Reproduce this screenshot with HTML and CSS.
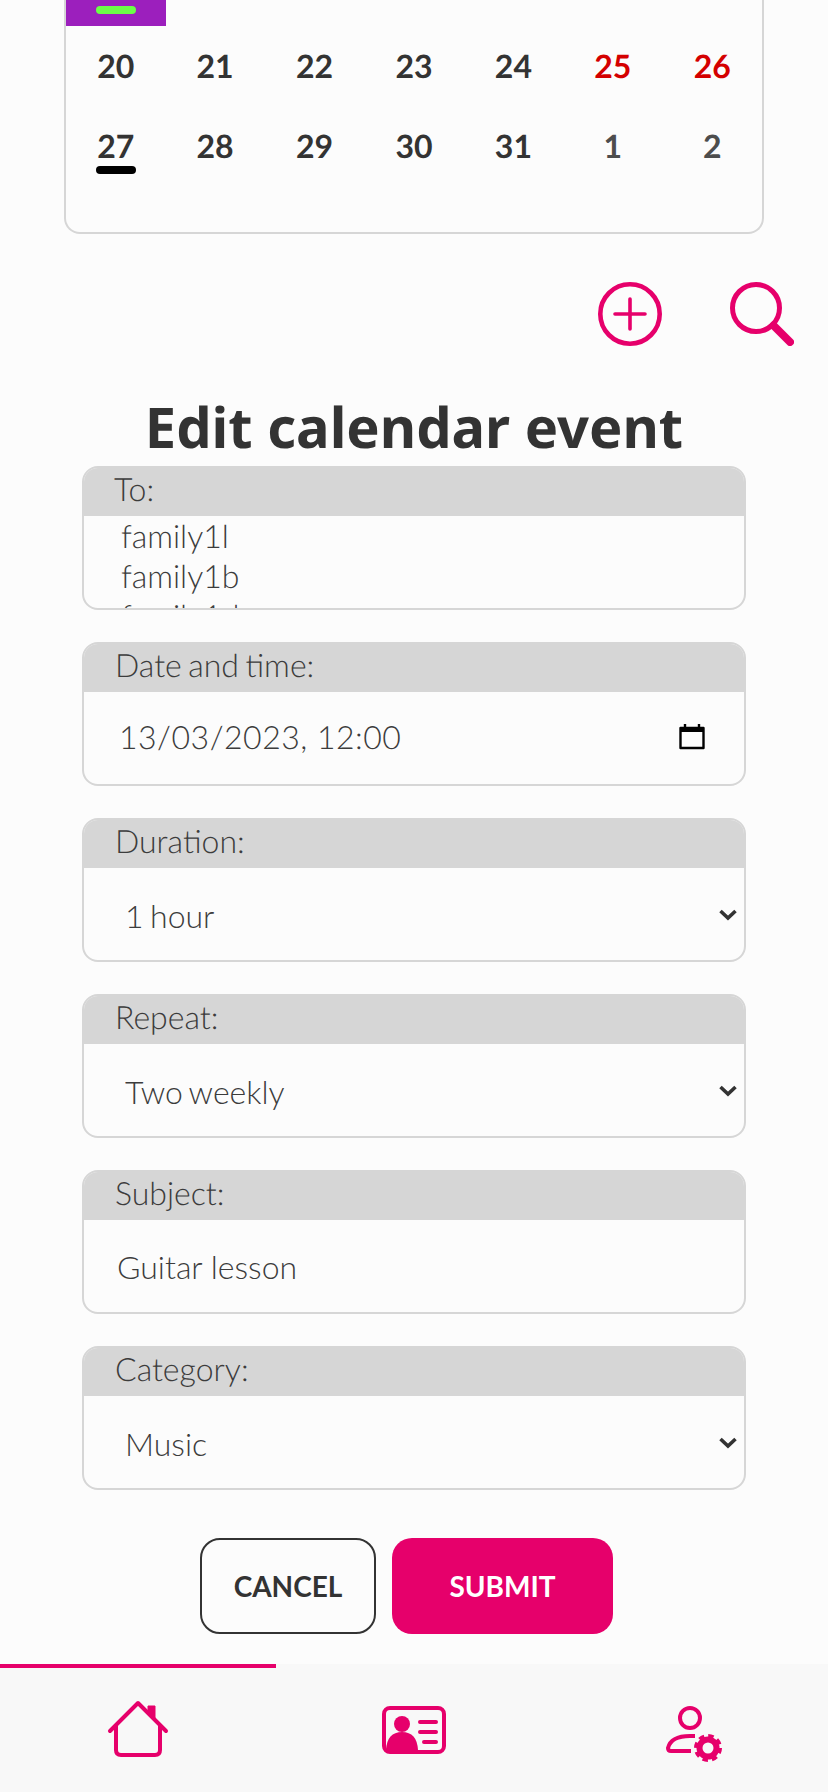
FILE: index.html
```html
<!DOCTYPE html>
<html lang="en">
<head>
<meta charset="utf-8">
<title>Edit calendar event</title>
<link rel="stylesheet" href="styles.css">
</head>
<body>
<div class="page">
  <section class="calendar">
    <div class="week week-partial">
      <div class="day-mark"><span class="bar bar-green"></span></div>
    </div>
    <div class="week">
      <div class="day">20</div><div class="day">21</div><div class="day">22</div><div class="day">23</div><div class="day">24</div><div class="day red">25</div><div class="day red">26</div>
    </div>
    <div class="week">
      <div class="day today">27<span class="bar bar-black"></span></div><div class="day">28</div><div class="day">29</div><div class="day">30</div><div class="day">31</div><div class="day muted">1</div><div class="day muted">2</div>
    </div>
  </section>

  <div class="actions">
    <svg class="icon-add" width="64" height="64" viewBox="0 0 64 64" fill="none" stroke="#e6006b"><circle cx="32" cy="32" r="29.7" stroke-width="4.6"/><path d="M32 17V47M17 32H47" stroke-width="3.6" stroke-linecap="round"/></svg>
    <svg class="icon-search" width="64" height="64" viewBox="0 0 64 64" fill="none" stroke="#e6006b"><circle cx="26" cy="26" r="23.5" stroke-width="5"/><path d="M43.5 43.5L60 60" stroke-width="8" stroke-linecap="round"/></svg>
  </div>

  <h1 class="title">Edit calendar event</h1>

  <form class="form">
    <div class="field">
      <div class="label label-to">To:</div>
      <div class="recipients">
        <div>family1l</div>
        <div>family1b</div>
        <div>family1d</div>
      </div>
    </div>
    <div class="field">
      <div class="label">Date and time:</div>
      <div class="value value-date">
        <span>13/03/2023, 12:00</span>
        <svg class="icon-cal" width="28" height="28" viewBox="0 0 28 28" fill="none"><path d="M2.5 6H25.5V26H2.5Z" stroke="#000" stroke-width="2.4" stroke-linejoin="round"/><path d="M2 5H26V10H2Z" fill="#000"/><path d="M7 2V6M21 2V6" stroke="#000" stroke-width="2.4"/></svg>
      </div>
    </div>
    <div class="field">
      <div class="label">Duration:</div>
      <div class="select-wrap">
        <select class="control select s-duration"><option>1 hour</option></select>
        <svg class="chevron" width="18" height="12" viewBox="0 0 18 12" fill="none"><path d="M1.5 2L9 9L16.5 2" stroke="#333" stroke-width="3.6"/></svg>
      </div>
    </div>
    <div class="field">
      <div class="label">Repeat:</div>
      <div class="select-wrap">
        <select class="control select s-repeat"><option>Two weekly</option></select>
        <svg class="chevron" width="18" height="12" viewBox="0 0 18 12" fill="none"><path d="M1.5 2L9 9L16.5 2" stroke="#333" stroke-width="3.6"/></svg>
      </div>
    </div>
    <div class="field">
      <div class="label">Subject:</div>
      <input class="control text" type="text" value="Guitar lesson">
    </div>
    <div class="field">
      <div class="label">Category:</div>
      <div class="select-wrap">
        <select class="control select s-category"><option>Music</option></select>
        <svg class="chevron" width="18" height="12" viewBox="0 0 18 12" fill="none"><path d="M1.5 2L9 9L16.5 2" stroke="#333" stroke-width="3.6"/></svg>
      </div>
    </div>
    <div class="buttons">
      <button class="btn btn-cancel" type="button">CANCEL</button>
      <button class="btn btn-submit" type="button">SUBMIT</button>
    </div>
  </form>

  <nav class="nav">
    <span class="nav-active"></span>
    <div class="nav-item">
      <svg width="64" height="64" viewBox="0 0 64 64" fill="none" stroke="#e6006b"><path d="M42 8H49V22L42 16Z" fill="#e6006b" stroke="#e6006b" stroke-width="1" stroke-linejoin="round"/><path d="M4 33L32 5L60 33" stroke-width="4" stroke-linecap="round" stroke-linejoin="round"/><path d="M10 28V52Q10 57 15 57H49Q54 57 54 52V28" stroke-width="4"/></svg>
    </div>
    <div class="nav-item">
      <svg width="64" height="64" viewBox="0 0 64 64" fill="none"><rect x="2" y="10" width="60" height="44" rx="6" stroke="#e6006b" stroke-width="4"/><circle cx="20" cy="26" r="8" fill="#e6006b"/><path d="M4 52Q5 34 20 34Q35 34 36 52Z" fill="#e6006b"/><path d="M38 24H54M38 34H54M42 44H54" stroke="#e6006b" stroke-width="4" stroke-linecap="round"/></svg>
    </div>
    <div class="nav-item">
      <svg width="64" height="64" viewBox="0 0 64 64" fill="none" stroke="#e6006b"><circle cx="32" cy="20" r="10" stroke-width="4"/><path d="M37 38H32Q13 38 10 50Q10 53 13 53H33" stroke-width="4"/><circle cx="50" cy="50" r="8.5" stroke-width="6"/><circle cx="50" cy="50" r="12" stroke-width="4" stroke-dasharray="5.4 4" /></svg>
    </div>
  </nav>
</div>
</body>
</html>
```
FILE: styles.css
```css
* { box-sizing: border-box; }
html, body { margin: 0; padding: 0; }
body {
  background: #fcfcfc;
  color: #333;
  font-family: "Lato", "Liberation Sans", sans-serif;
  text-rendering: geometricPrecision;
}
.page {
  height: 1792px;
  overflow: hidden;
  display: flex;
  flex-direction: column;
}
.calendar {
  width: 700px;
  margin-left: 64px;
  height: 234px;
  flex: none;
  border: 2px solid #d6d6d6;
  border-top: 0;
  border-radius: 0 0 16px 16px;
}
.week {
  display: grid;
  grid-template-columns: repeat(7, 1fr);
  height: 80px;
}
.week-partial { height: 26px; }
.day-mark {
  background: #9c1fbd;
  display: flex;
  justify-content: center;
  padding-top: 6px;
  width: 100px;
}
.bar {
  display: block;
  width: 40px;
  height: 8px;
  border-radius: 4px;
}
.bar-green { background: #6bff47; }
.bar-black {
  background: #000;
  position: absolute;
  left: 50%;
  margin-left: -20px;
  top: 60px;
}
.day {
  position: relative;
  text-align: center;
  font-size: 32px;
  font-weight: 700;
  line-height: 40px;
  padding-top: 20px;
  color: #333;
}
.red { color: #d40000; }
.muted { color: #4d4d4d; }
.actions {
  display: flex;
  justify-content: flex-end;
  gap: 68px;
  padding: 48px 34px 0 0;
  height: 112px;
  flex: none;
}
.title {
  margin: 0;
  height: 120px;
  padding-top: 51px;
  text-align: center;
  font-family: "Noto Sans", "Open Sans", sans-serif;
  font-size: 56px;
  line-height: 60px;
  font-weight: 700;
  color: #333;
  white-space: nowrap;
}
.form {
  margin: 0 82px;
  display: flex;
  flex-direction: column;
  gap: 32px;
}
.field {
  height: 144px;
  border: 2px solid #d6d6d6;
  border-radius: 16px;
  overflow: hidden;
  display: flex;
  flex-direction: column;
  font-weight: 300;
  font-size: 32px;
  color: #3c3c3c;
}
.label {
  flex: none;
  margin: -2px -2px 0;
  padding: 5px 0 0 33px;
  height: 50px;
  background: #d6d6d6;
  line-height: 36px;
  word-spacing: -2.2px;
}
.label-to { padding-left: 32px; }
.recipients {
  height: 92px;
  overflow: hidden;
  padding: 0 0 0 37px;
  line-height: 40px;
}
.recipients div { height: 40px; }
.value-date {
  display: flex;
  align-items: center;
  justify-content: space-between;
  height: 92px;
  padding: 0 38px 4px 35px;
  letter-spacing: 0.5px;
}
.select-wrap {
  position: relative;
  height: 92px;
}
.chevron {
  position: absolute;
  right: 7px;
  top: 41px;
  pointer-events: none;
}
.control {
  width: 100%;
  height: 92px;
  border: 0;
  background: transparent;
  font-family: inherit;
  font-weight: 300;
  font-size: 32px;
  color: #3c3c3c;
  outline: none;
}
.select {
  display: block;
  appearance: none;
  padding: 2px 0 0 41px;
  word-spacing: -2.2px;
}
.text { padding: 0 0 0 33px; }
.buttons {
  display: flex;
  justify-content: flex-start;
  gap: 16px;
  margin: 16px 0 0 118px;
}
.btn {
  height: 96px;
  border-radius: 20px;
  font-family: inherit;
  font-size: 28px;
  font-weight: 700;
  padding: 0;
}
.btn-cancel {
  width: 176px;
  background: transparent;
  border: 2px solid #333;
  color: #333;
}
.btn-submit {
  width: 221px;
  background: #e6006b;
  border: 0;
  color: #fff;
}
.nav {
  margin-top: auto;
  position: relative;
  height: 128px;
  flex: none;
  background: #f8f8f8;
  display: grid;
  grid-template-columns: repeat(3, 1fr);
}
.nav-active {
  position: absolute;
  left: 0;
  top: 0;
  width: 276px;
  height: 4px;
  background: #e6006b;
}
.nav-item {
  display: flex;
  justify-content: center;
  padding-top: 34px;
}
```
